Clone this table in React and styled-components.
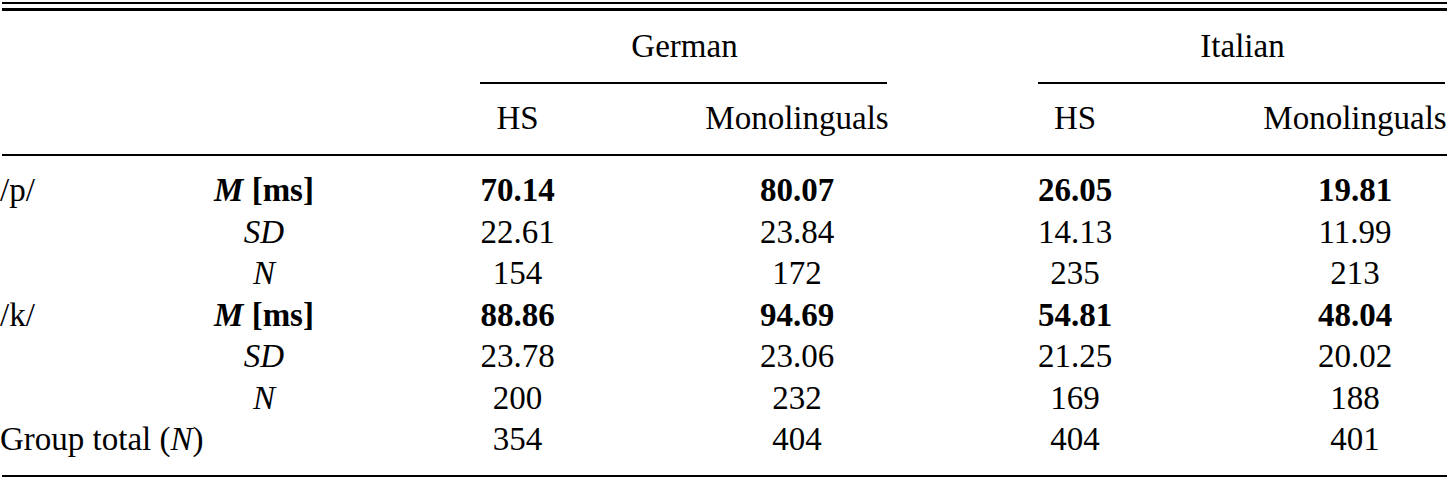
import React from "react";
import styled, { createGlobalStyle } from "styled-components";

const Global = createGlobalStyle`
  html, body { margin: 0; padding: 0; background: #fff; }
  body { font-family: "Liberation Serif", "Times New Roman", serif; color: #000; }
`;

const Table = styled.div`
  display: grid;
  width: 1449px;
  grid-template-columns:
    [lbl-start] 209px [lbl-end stat-start] 110px [stat-end] 161px
    [gh-start] 75px [gh-end] 150px
    [gm-start] 184px [gm-end] 149px
    [ih-start] 74px [ih-end] 151px
    [im-start] 184px [im-end] 1fr;
  font-family: "Liberation Serif", "Times New Roman", serif;
  font-size: 33px;
  line-height: 41.5px;
  color: #000;
`;

const DoubleRule = styled.div`
  grid-column: 1 / -1;
  margin: 2px 2px 15px 2px;
  height: 4px;
  border-top: 2px solid #000;
  border-bottom: 3px solid #000;
`;

const Rule = styled.div`
  grid-column: ${(p) => p.$span || "1 / -1"};
  margin: 14.5px 2px 14px ${(p) => (p.$span ? "0" : "2px")};
  margin-right: 2px;
  border-top: ${(p) => p.$w || 2}px solid #000;
`;

const Cell = styled.div`
  grid-column: ${(p) => p.$col};
  text-align: ${(p) => p.$align || "center"};
  font-weight: ${(p) => (p.$bold ? 700 : 400)};
  font-style: ${(p) => (p.$italic ? "italic" : "normal")};
  white-space: nowrap;
`;

const Em = styled.i`
  font-style: italic;
`;

const cols = ["gh", "gm", "ih", "im"];

const groups = [
  {
    label: "/p/",
    m: ["70.14", "80.07", "26.05", "19.81"],
    sd: ["22.61", "23.84", "14.13", "11.99"],
    n: ["154", "172", "235", "213"],
  },
  {
    label: "/k/",
    m: ["88.86", "94.69", "54.81", "48.04"],
    sd: ["23.78", "23.06", "21.25", "20.02"],
    n: ["200", "232", "169", "188"],
  },
];

const totals = ["354", "404", "404", "401"];

export default function App() {
  return (
    <>
      <Global />
      <Table>
        <DoubleRule />
        <Cell $col="gh-start / gm-end">German</Cell>
        <Cell $col="ih-start / im-end">Italian</Cell>
        <Rule $span="gh-start / gm-end" />
        <Rule $span="ih-start / im-end" />
        <Cell $col="gh">HS</Cell>
        <Cell $col="gm">Monolinguals</Cell>
        <Cell $col="ih">HS</Cell>
        <Cell $col="im">Monolinguals</Cell>
        <Rule />
        {groups.map((g) => (
          <React.Fragment key={g.label}>
            <Cell $col="lbl" $align="left">{g.label}</Cell>
            <Cell $col="stat" $bold>
              <Em>M</Em> [ms]
            </Cell>
            {g.m.map((v, i) => (
              <Cell key={"m" + i} $col={cols[i]} $bold>{v}</Cell>
            ))}
            <Cell $col="stat" $italic>SD</Cell>
            {g.sd.map((v, i) => (
              <Cell key={"s" + i} $col={cols[i]}>{v}</Cell>
            ))}
            <Cell $col="stat" $italic>N</Cell>
            {g.n.map((v, i) => (
              <Cell key={"n" + i} $col={cols[i]}>{v}</Cell>
            ))}
          </React.Fragment>
        ))}
        <Cell $col="lbl-start / stat-end" $align="left">
          Group total (<Em>N</Em>)
        </Cell>
        {totals.map((v, i) => (
          <Cell key={"t" + i} $col={cols[i]}>{v}</Cell>
        ))}
        <Rule $w={2.5} />
      </Table>
    </>
  );
}
